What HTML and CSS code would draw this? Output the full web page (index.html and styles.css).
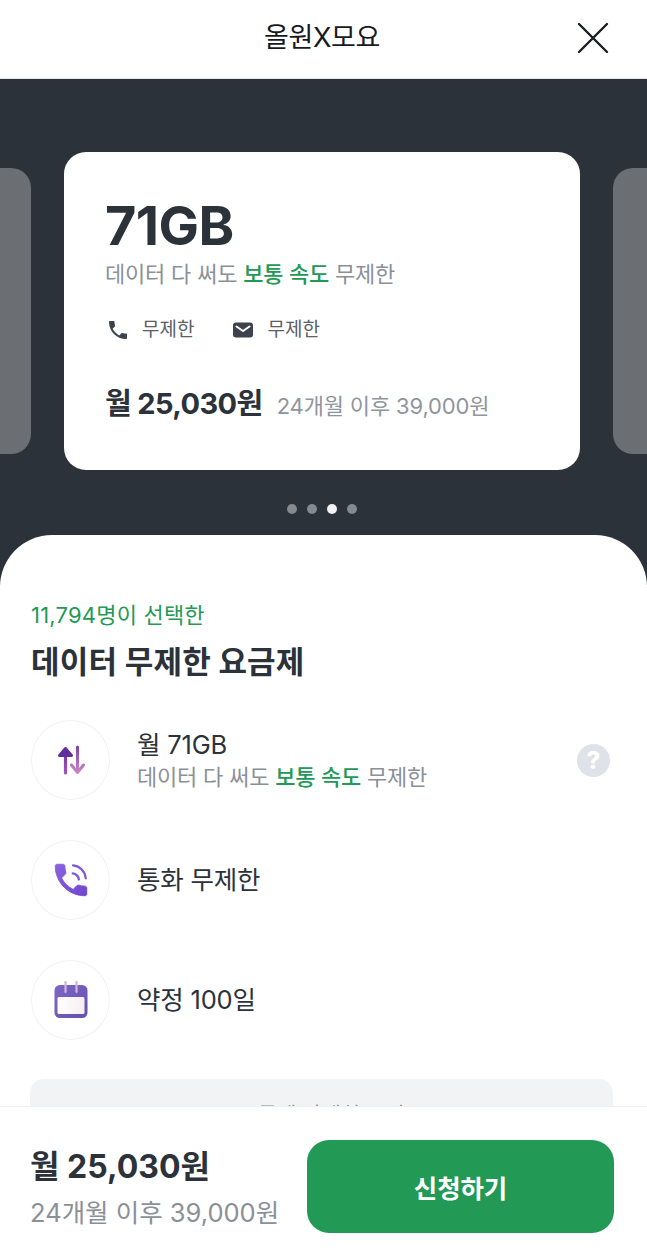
FILE: index.html
```html
<!DOCTYPE html>
<html lang="ko">
<head>
<meta charset="utf-8">
<title>올원X모요</title>
<link rel="stylesheet" href="styles.css">
</head>
<body>
<div class="page">
  <header class="topbar">
    <h1 class="topbar-title">올원X모요</h1>
    <button class="close" aria-label="닫기">
      <svg width="32" height="32" viewBox="0 0 32 32"><path d="M2 2 L30 30 M30 2 L2 30" stroke="#1a1d21" stroke-width="2.4" stroke-linecap="round" fill="none"/></svg>
    </button>
  </header>

  <section class="hero">
    <div class="track">
      <div class="peek"></div>
      <article class="card">
        <div class="card-data">71GB</div>
        <p class="card-sub">데이터 다 써도 <b class="accent">보통 속도</b> 무제한</p>
        <div class="perks">
          <span class="perk">
            <svg class="perk-icon" width="24" height="24" viewBox="0 0 24 24"><path fill="#3d434c" d="M6.62 10.79c1.44 2.83 3.76 5.14 6.59 6.59l2.2-2.2c.27-.27.67-.36 1.02-.24 1.12.37 2.33.57 3.57.57.55 0 1 .45 1 1V20c0 .55-.45 1-1 1-9.39 0-17-7.61-17-17 0-.55.45-1 1-1h3.5c.55 0 1 .45 1 1 0 1.25.2 2.45.57 3.57.11.35.03.74-.25 1.02l-2.2 2.2z"/></svg>
            무제한
          </span>
          <span class="perk">
            <svg class="perk-icon" width="24" height="24" viewBox="0 0 24 24"><rect x="2" y="4.5" width="20" height="15" rx="3" fill="#3d434c"/><path d="M5.5 8.5 L12 13 L18.500 8.500" stroke="#fff" stroke-width="2" fill="none" stroke-linecap="round" stroke-linejoin="round"/></svg>
            무제한
          </span>
        </div>
        <div class="card-price">
          <strong class="card-price-now">월 25,030원</strong>
          <span class="card-price-later">24개월 이후 39,000원</span>
        </div>
      </article>
      <div class="peek"></div>
    </div>
    <div class="dots">
      <i class="dot"></i><i class="dot"></i><i class="dot dot-on"></i><i class="dot"></i>
    </div>
  </section>

  <section class="sheet">
    <p class="sheet-count">11,794명이 선택한</p>
    <h2 class="sheet-title">데이터 무제한 요금제</h2>
    <ul class="features">
      <li class="feature">
        <span class="badge">
          <svg width="36" height="36" viewBox="0 0 36 36">
            <defs>
              <linearGradient id="arrowA" gradientUnits="userSpaceOnUse" x1="0" y1="5" x2="0" y2="32"><stop offset="0" stop-color="#5f2f9c"/><stop offset="1" stop-color="#a855b5"/></linearGradient>
              <linearGradient id="arrowB" gradientUnits="userSpaceOnUse" x1="0" y1="5" x2="0" y2="32"><stop offset="0" stop-color="#7d44a8"/><stop offset="1" stop-color="#d08ac8"/></linearGradient>
            </defs>
            <path d="M12.500 31 V8" stroke="url(#arrowA)" stroke-width="3.200" stroke-linecap="round" fill="none"/>
            <path d="M6.500 13.500 L12.500 6.500 L18.500 13.500 Z" stroke="#5f2f9c" stroke-width="3" stroke-linejoin="round" fill="#5f2f9c"/>
            <path d="M24.500 5 V29" stroke="url(#arrowB)" stroke-width="3" stroke-linecap="round" fill="none"/>
            <path d="M18.500 23 L24.500 30.500 L30.500 23" stroke="url(#arrowB)" stroke-width="3" stroke-linejoin="round" stroke-linecap="round" fill="none"/>
          </svg>
        </span>
        <div class="feature-text">
          <div class="feature-name">월 71GB</div>
          <div class="feature-note">데이터 다 써도 <b class="accent">보통 속도</b> 무제한</div>
        </div>
        <span class="help">?</span>
      </li>
      <li class="feature">
        <span class="badge">
          <svg width="42" height="42" viewBox="0 0 24 24">
            <defs><linearGradient id="callG" x1="0" y1="0" x2="1" y2="1"><stop offset="0" stop-color="#8a63e0"/><stop offset="1" stop-color="#6f45cc"/></linearGradient></defs>
            <path fill="url(#callG)" stroke="url(#callG)" stroke-width="0.5" stroke-linejoin="round" d="M20 15.500c-1.250 0-2.450-.2-3.570-.57-.35-.11-.74-.03-1.020.24l-2.200 2.200c-2.830-1.440-5.150-3.750-6.590-6.580l2.200-2.210c.28-.27.36-.66.25-1.010C8.700 6.450 8.500 5.250 8.500 4c0-.55-.45-1-1-1H4c-.55 0-1 .45-1 1 0 9.390 7.610 17 17 17 .55 0 1-.45 1-1v-3.500c0-.55-.45-1-1-1z"/>
            <path d="M13 8.200c1.900.3 3.200 1.600 3.500 3.500 M13.200 3.700c4 .4 6.800 3.300 7.200 7.300" stroke="#8059d8" stroke-width="1.300" fill="none" stroke-linecap="round"/>
          </svg>
        </span>
        <div class="feature-text"><div class="feature-name">통화 무제한</div></div>
      </li>
      <li class="feature">
        <span class="badge">
          <svg width="34" height="38" viewBox="0 0 34 38">
            <defs>
              <linearGradient id="calG" x1="0" y1="0" x2="1" y2="1"><stop offset="0" stop-color="#7d67c8"/><stop offset="1" stop-color="#6450b0"/></linearGradient>
              <linearGradient id="calW" x1="0" y1="0" x2="1" y2="0"><stop offset="0" stop-color="#ffffff"/><stop offset="1" stop-color="#f7eef2"/></linearGradient>
            </defs>
            <rect x="0.500" y="4" width="33" height="33" rx="5.500" fill="url(#calG)"/>
            <rect x="3.500" y="16" width="27" height="17" rx="1.500" fill="url(#calW)"/>
            <path d="M11.500 1 V11 M22.500 1 V11" stroke="#d3b4dc" stroke-width="2.200" stroke-linecap="round"/>
          </svg>
        </span>
        <div class="feature-text"><div class="feature-name">약정 100일</div></div>
      </li>
    </ul>
    <div class="more">요금제 자세히 보기</div>
  </section>

  <footer class="bottombar">
    <div class="bottom-price">
      <strong class="bottom-now">월 25,030원</strong>
      <span class="bottom-later">24개월 이후 39,000원</span>
    </div>
    <button class="apply">신청하기</button>
  </footer>
</div>
</body>
</html>
```

FILE: styles.css
```css
* { box-sizing: border-box; }
html, body { margin: 0; padding: 0; background: #fff; }
body { font-family: Inter, "Noto Sans CJK KR", "Noto Sans", sans-serif; color: #2c323a; }
p, h1, h2, ul { margin: 0; padding: 0; }
ul { list-style: none; }
b { font-weight: 500; }

.page { position: relative; width: 647px; height: 1258px; overflow: hidden; background: #fff; }

.topbar { height: 79px; display: flex; align-items: center; justify-content: center; position: relative; border-bottom: 1px solid #e4e5e7; padding: 0 3px 2px 0; }
.topbar-title { font-size: 27px; font-weight: 400; color: #17191c; letter-spacing: -0.4px; line-height: 36px; }
.close { position: absolute; right: 38px; top: 22px; width: 32px; height: 32px; padding: 0; border: 0; background: none; }

.hero { background: #2c323a; height: 506px; padding-top: 73px; overflow: hidden; }
.track { display: flex; align-items: center; gap: 33px; margin-left: -485px; width: 1614px; }
.peek { flex: 0 0 516px; height: 286px; border-radius: 20px; background: #6b6e73; }
.card { flex: 0 0 516px; height: 318px; border-radius: 22px; background: #fff; padding: 46px 41px 0; }
.card-data { font-size: 54px; font-weight: 700; line-height: 56px; letter-spacing: -0.6px; color: #2c323a; }
.card-sub { font-size: 22px; line-height: 32px; margin-top: 4px; color: #8b9098; letter-spacing: -0.2px; }
.accent { color: #229955; }
.perks { display: flex; gap: 37px; margin: 26px 0 0 1px; }
.perk { display: flex; align-items: center; gap: 12px; font-size: 19px; line-height: 28px; color: #5b6068; }
.perk-icon { display: block; }
.card-price { display: flex; align-items: baseline; gap: 14px; margin-top: 42px; }
.card-price-now { font-size: 29px; font-weight: 700; line-height: 36px; color: #2c323a; letter-spacing: -0.6px; }
.card-price-later { font-size: 22px; line-height: 30px; color: #8f959c; letter-spacing: -0.15px; }

.dots { display: flex; justify-content: center; gap: 10px; margin-top: 34px; padding-right: 3px; }
.dot { display: block; width: 10px; height: 10px; border-radius: 50%; background: #858a91; }
.dot-on { background: #f2f3f4; }

.sheet { position: relative; margin-top: -50px; background: #fff; border-radius: 52px 52px 0 0; padding: 64px 37px 0 31px; height: 723px; }
.sheet-count { font-size: 22px; line-height: 32px; color: #229955; letter-spacing: 0.2px; }
.sheet-title { font-size: 31px; font-weight: 700; line-height: 42px; margin-top: 10px; color: #2c323a; letter-spacing: 0.2px; }
.features { display: flex; flex-direction: column; gap: 40px; margin-top: 37px; }
.feature { display: flex; align-items: center; gap: 27px; height: 80px; }
.badge { flex: 0 0 79px; height: 80px; border-radius: 50%; border: 1.500px solid #f1f2f4; display: flex; align-items: center; justify-content: center; background: #fff; }
.feature-text { flex: 1; }
.feature-name { font-size: 25.500px; line-height: 34px; color: #2c323a; letter-spacing: -0.2px; }
.feature-note { font-size: 22px; line-height: 30px; color: #8b9098; letter-spacing: -0.2px; }
.help { flex: 0 0 33px; height: 33px; border-radius: 50%; background: #dfe2e8; color: #fff; font-size: 24px; font-weight: 800; line-height: 33px; text-align: center; }
.more { position: absolute; left: 30px; right: 34px; top: 544px; height: 120px; border-radius: 14px; background: #f2f3f5; padding-top: 24px; line-height: 24px; text-align: center; font-size: 21px; color: #8b9098; }

.bottombar { position: absolute; left: 0; right: 0; bottom: 0; height: 152px; border-top: 1px solid #eff0f2; background: #fff; display: flex; align-items: flex-start; justify-content: space-between; padding: 33px 33px 0 30px; }
.bottom-price { display: flex; flex-direction: column; }
.bottom-now { font-size: 32px; font-weight: 700; line-height: 50px; margin-top: 2px; color: #2c323a; letter-spacing: 0; }
.bottom-later { font-size: 25.500px; line-height: 38px; margin-top: 2px; color: #8b9098; }
.apply { width: 307px; height: 93px; border: 0; border-radius: 22px; background: #229955; color: #fff; font-family: inherit; font-size: 25.500px; font-weight: 700; letter-spacing: -0.1px; }
```
